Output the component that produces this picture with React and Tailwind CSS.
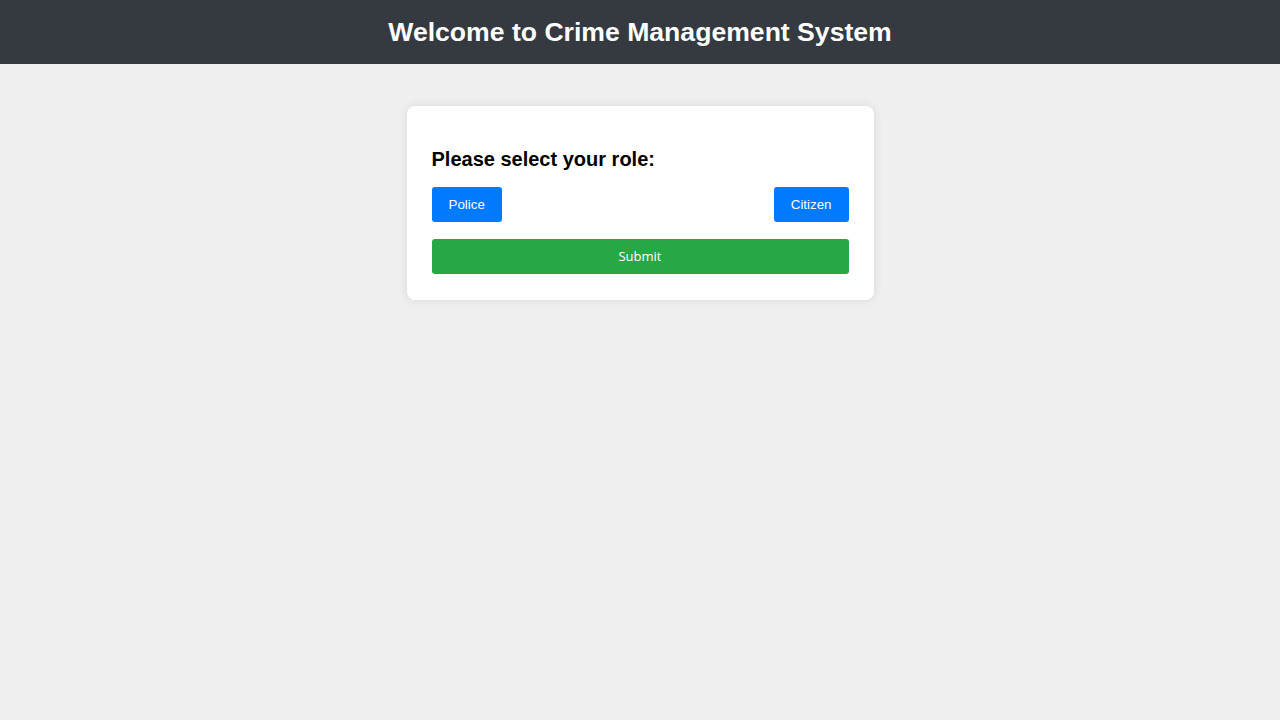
import { useState } from "react";

const App = () => {
    const [role, setRole] = useState(null);

    return (
        <div className="min-h-screen bg-[#efefef] font-['Liberation_Sans',Arial,sans-serif]">
            {/* Header */}
            <header className="h-16 bg-[#343a40] flex items-center justify-center pt-[2px]">
                <h1 className="text-white text-[26.6px] font-bold">Welcome to Crime Management System</h1>
            </header>

            {/* Role card */}
            <div className="flex justify-center pt-[42px]">
                <div className="w-[467px] bg-white rounded-lg px-[25px] pt-[25px] pb-[26px] shadow-[0_0_10px_rgba(0,0,0,0.1)]">
                    <h3 className="text-[20px] leading-[23px] font-bold text-black mt-[17px] mb-[16px]">
                        Please select your role:
                    </h3>
                    <div className="flex justify-between">
                        <button
                            onClick={() => setRole("police")}
                            className="h-[35px] px-[17px] bg-[#007bff] text-white text-[13.33px] rounded-[3px]"
                        >
                            Police
                        </button>
                        <button
                            onClick={() => setRole("citizen")}
                            className="h-[35px] px-[17px] bg-[#007bff] text-white text-[13.33px] rounded-[3px]"
                        >
                            Citizen
                        </button>
                    </div>
                    <button
                        disabled={!role}
                        className="mt-[17px] w-full h-[35px] bg-[#28a745] text-white text-[13px] rounded-[3px] font-['Open_Sans',sans-serif]"
                    >
                        Submit
                    </button>
                </div>
            </div>
        </div>
    );
};

export default App;
